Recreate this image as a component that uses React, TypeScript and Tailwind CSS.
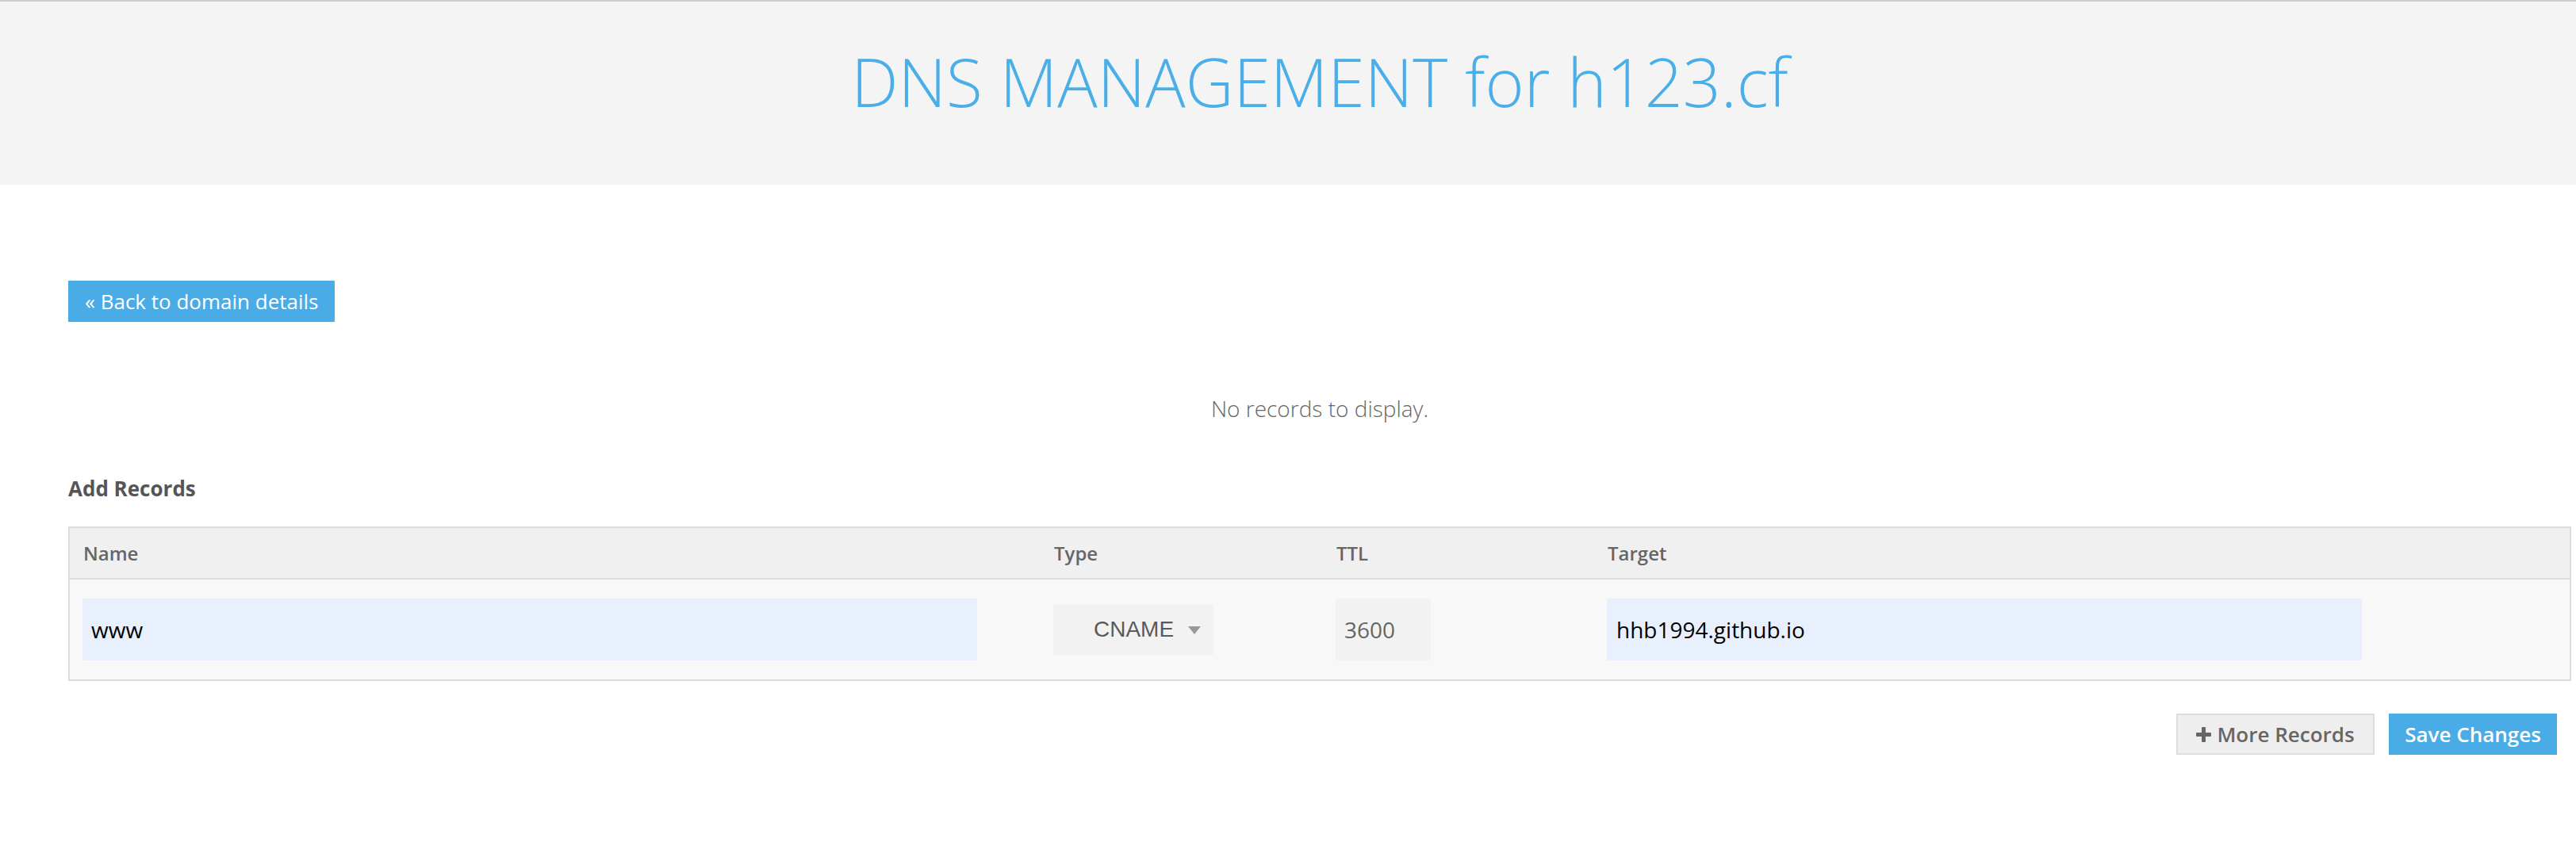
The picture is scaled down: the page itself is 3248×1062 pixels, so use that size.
const columns = ['Name', 'Type', 'TTL', 'Target']

export default function App() {
  return (
    <div className="min-h-screen bg-white font-['Open_Sans',sans-serif]">
      {/* Page heading */}
      <header className="h-[233px] border-t-2 border-[#cccccc] bg-[#f4f4f4] pl-[86px] pr-[6px] pt-[59px] text-center">
        <h1 className="text-[84px] leading-none font-light text-[#4aaee8]">DNS MANAGEMENT for h123.cf</h1>
      </header>

      <main className="pl-[86px] pr-[6px]">
        <button className="mt-[121px] flex h-[52px] items-center whitespace-nowrap bg-[#4aace6] px-[21px] text-[26px] text-white">
          « Back to domain details
        </button>

        <p className="mt-[89px] text-center text-[28px] leading-[40px] font-light text-[#666666]">
          No records to display.
        </p>

        <h2 className="mt-[63px] text-[26px] leading-[36px] font-bold text-[#555555]">Add Records</h2>

        {/* Records table */}
        <div className="mt-[30px] border-2 border-[#dddddd]">
          <div className="grid h-[65px] grid-cols-[1224px_356px_342px_1fr] items-center border-b-2 border-[#dddddd] bg-[#f0f0f0]">
            {columns.map((c) => (
              <div key={c} className="px-[17px] text-[24px] font-semibold text-[#666666]">
                {c}
              </div>
            ))}
          </div>
          <div className="grid h-[126px] grid-cols-[1224px_356px_342px_1fr] items-center bg-[#f8f8f8]">
            <div className="pl-[16px]">
              <input
                readOnly
                value="www"
                className="h-[78px] w-[1128px] bg-[#e8f0fe] px-[11px] text-[28px] text-black outline-none"
              />
            </div>
            <div className="pl-[16px]">
              <div className="flex h-[64px] w-[202px] items-center bg-[#f2f2f2] pl-[51px] font-['Liberation_Sans',Arial,sans-serif] text-[28px] text-[#5a5a5a]">
                CNAME
                <svg width="16" height="10" viewBox="0 0 16 10" className="ml-[18px] mt-[2px]">
                  <path d="M0 0 H16 L8 10 Z" fill="#999999" />
                </svg>
              </div>
            </div>
            <div className="pl-[16px]">
              <input
                readOnly
                value="3600"
                className="h-[78px] w-[120px] bg-[#f2f2f2] px-[11px] text-[28px] text-[#666666] outline-none"
              />
            </div>
            <div className="pl-[16px]">
              <input
                readOnly
                value="hhb1994.github.io"
                className="h-[78px] w-[952px] bg-[#e8f0fe] px-[12px] text-[28px] text-black outline-none"
              />
            </div>
          </div>
        </div>

        <div className="mt-[41px] mr-[18px] flex justify-end gap-[18px]">
          <button className="flex h-[52px] w-[250px] items-center justify-center gap-[7px] whitespace-nowrap border-2 border-[#dddddd] bg-[#eeeeee] text-[26px] font-semibold text-[#666666]">
            <svg width="19" height="19" viewBox="0 0 19 19">
              <rect x="7" y="0" width="5" height="19" rx="1" fill="#666666" />
              <rect x="0" y="7" width="19" height="5" rx="1" fill="#666666" />
            </svg>
            More Records
          </button>
          <button className="flex h-[52px] w-[212px] items-center justify-center whitespace-nowrap bg-[#4aace6] text-[26px] font-semibold text-white">
            Save Changes
          </button>
        </div>
      </main>
    </div>
  )
}
